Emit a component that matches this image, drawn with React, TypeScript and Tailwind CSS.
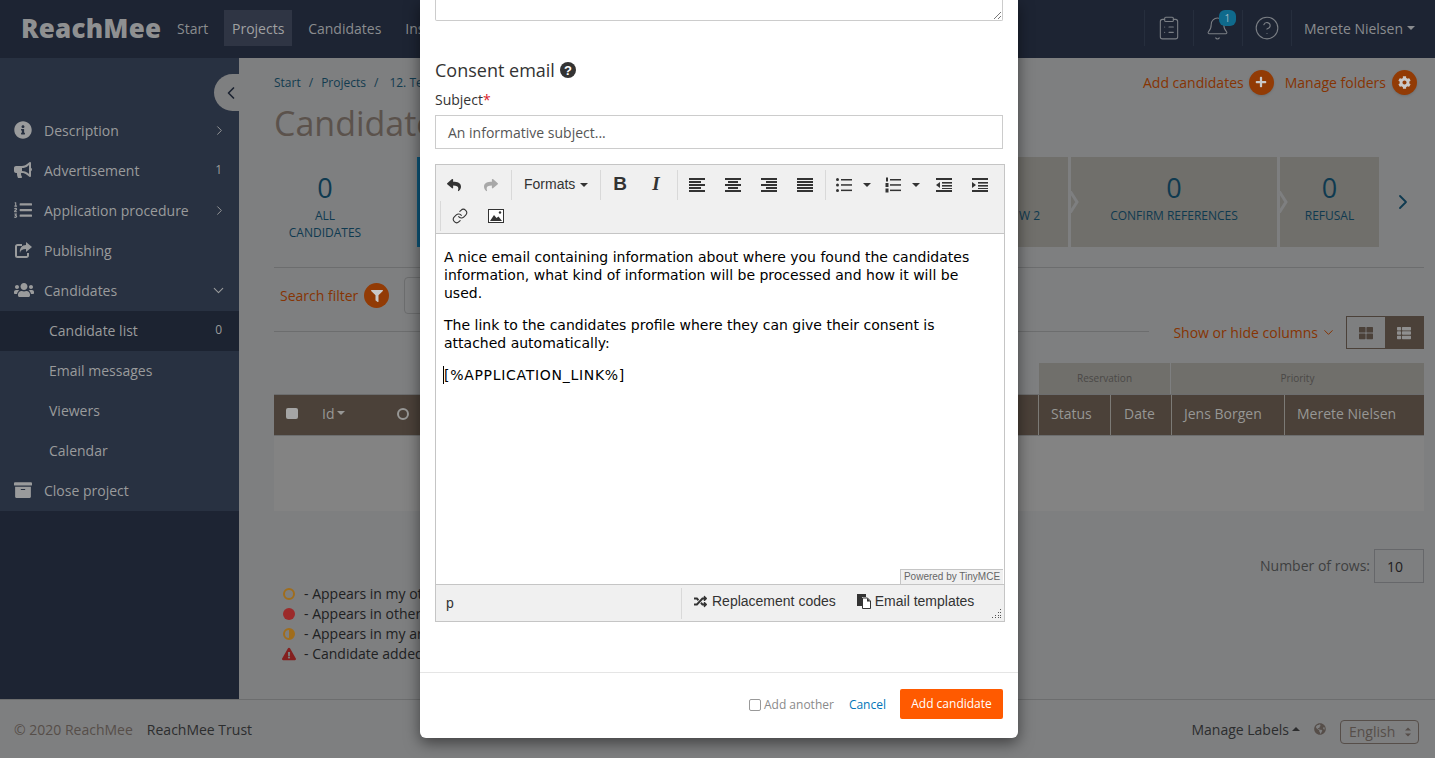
import React from "react";
import { Bell, ChevronDown, ChevronLeft, ChevronRight, CircleHelp, ClipboardList, Link } from "lucide-react";
import {
  FaArchive,
  FaBullhorn,
  FaCog,
  FaExclamationTriangle,
  FaFilter,
  FaGlobeAmericas,
  FaInfoCircle,
  FaListOl,
  FaPlus,
  FaRandom,
  FaReply,
  FaShare,
  FaThLarge,
  FaThList,
  FaUsers,
} from "react-icons/fa";

const Caret = ({ up = false, className = "" }: { up?: boolean; className?: string }) => (
  <span
    className={`inline-block w-0 h-0 border-x-4 border-x-transparent ${up ? "border-b-4 border-b-current" : "border-t-4 border-t-current"} ${className}`}
  />
);

// tinymce line icons: x offset and width per row
function Lines({ rows }: { rows: [number, number][] }) {
  return (
    <svg width="16" height="16" viewBox="0 0 16 16" fill="#333">
      {rows.map(([x, w], i) => (
        <rect key={i} x={x} y={1 + i * 3} width={w} height="2" />
      ))}
    </svg>
  );
}

const BulletIcon = () => (
  <svg width="16" height="16" viewBox="0 0 16 16" fill="#333">
    <circle cx="1.5" cy="2.5" r="1.5" />
    <circle cx="1.5" cy="8" r="1.5" />
    <circle cx="1.5" cy="13.5" r="1.5" />
    <rect x="5" y="2" width="11" height="1.5" />
    <rect x="5" y="7.2" width="11" height="1.5" />
    <rect x="5" y="12.6" width="11" height="1.5" />
  </svg>
);

const NumberIcon = () => (
  <svg width="16" height="16" viewBox="0 0 16 16" fill="#333">
    <rect x="1" y="0.5" width="2" height="4" />
    <rect x="0.5" y="6" width="3" height="4" />
    <rect x="0.5" y="11.5" width="3" height="4" />
    <rect x="5" y="2" width="11" height="1.5" />
    <rect x="5" y="7.2" width="11" height="1.5" />
    <rect x="5" y="12.6" width="11" height="1.5" />
  </svg>
);

const IndentIcon = ({ out = false }: { out?: boolean }) => (
  <svg width="18" height="16" viewBox="0 0 18 16" fill="#333">
    <rect x="1" y="1" width="16" height="2" />
    <rect x="7" y="5" width="10" height="1.6" />
    <rect x="7" y="8" width="10" height="1.6" />
    <rect x="1" y="13" width="16" height="2" />
    <rect x="7" y="11" width="10" height="1" />
    {out ? <path d="M5 5v6L1 8z" /> : <path d="M1 5v6l4-3z" />}
  </svg>
);

const ImageIcon = () => (
  <svg width="16" height="14" viewBox="0 0 16 14">
    <rect x="0.5" y="0.5" width="15" height="13" fill="#fff" stroke="#333" />
    <path d="M2 12l4-6 2.5 3 2-1.5L14 12z" fill="#333" />
    <circle cx="12" cy="3.500" r="1.2" fill="#333" />
  </svg>
);

const TemplatesIcon = () => (
  <svg width="14" height="15" viewBox="0 0 14 15">
    <path d="M0 0h9v3H5v9H0z" fill="#333" />
    <path d="M5.500 4h5l3 3v7.500h-8z" fill="#fff" stroke="#333" />
    <path d="M10 4v3.500h3.500z" fill="#333" />
  </svg>
);

const PublishIcon = () => (
  <svg width="18" height="18" viewBox="0 0 18 18" fill="none">
    <path d="M8 4H3.500A1.500 1.500 0 0 0 2 5.500v9A1.500 1.500 0 0 0 3.500 16h9a1.500 1.500 0 0 0 1.500-1.500V12" stroke="currentColor" strokeWidth="2" />
    <path d="M12 1l6 5-6 5V8C8.500 8 6.500 9 6 12c-.8-4.500 2-8 6-8z" fill="currentColor" />
  </svg>
);

const StageArrow = () => (
  <svg width="10" height="22" viewBox="0 0 10 22" fill="none" className="absolute -left-[2px] top-[34px]">
    <path d="M1 0l7 11-7 11" stroke="#7e7f80" strokeWidth="3" />
  </svg>
);

const ToolButton = ({ children }: { children: React.ReactNode }) => (
  <button className="w-9 h-[30px] flex items-center justify-center text-[#333]">{children}</button>
);

const ToolSep = () => <div className="w-px h-[30px] bg-[#d9d9d9]" />;

const sideItems = [
  { icon: <FaInfoCircle />, label: "Description", arrow: true },
  { icon: <FaBullhorn />, label: "Advertisement", count: "1" },
  { icon: <FaListOl />, label: "Application procedure", arrow: true },
  { icon: <PublishIcon />, label: "Publishing" },
  { icon: <FaUsers size={20} />, label: "Candidates", open: true },
];

const subItems = ["Candidate list", "Email messages", "Viewers", "Calendar"];

function Sidebar() {
  return (
    <aside className="relative w-[239px] shrink-0 bg-[#1d2433] text-[14px] text-[#9a9b9c]">
      <div className="bg-[#283141] pt-[53px]">
        {sideItems.map((item) => (
          <div key={item.label} className="h-10 flex items-center pl-[14px] pr-[12px] pb-[2px]">
            <span className="w-[30px] text-[18px] shrink-0">{item.icon}</span>
            <span className="flex-1">{item.label}</span>
            {item.arrow && <ChevronRight size={15} strokeWidth={1.5} />}
            {item.count && <span className="text-[12px] pr-[5px]">{item.count}</span>}
            {item.open && <ChevronDown size={17} strokeWidth={1.5} />}
          </div>
        ))}
        {subItems.map((label, i) => (
          <div key={label} className={`h-10 flex items-center pl-[49px] pr-[17px] pb-[2px] ${i === 0 ? "bg-[#1c2331]" : ""}`}>
            <span className="flex-1">{label}</span>
            {i === 0 && <span className="text-[12px]">0</span>}
          </div>
        ))}
        <div className="h-10 flex items-center pl-[14px] pb-[2px]">
          <span className="w-[30px] text-[18px] shrink-0">
            <FaArchive />
          </span>
          Close project
        </div>
      </div>
      <div className="absolute right-0 top-[16px] w-[25px] h-[37px] rounded-l-full bg-[#7e7f80] flex items-center justify-center pl-[8px] text-[#1c2331]">
        <ChevronLeft size={20} strokeWidth={2} className="shrink-0" />
      </div>
    </aside>
  );
}

function StageTabs() {
  return (
    <div className="mt-[9px] flex items-stretch h-[90px] text-[#0f3a50]">
      <div className="w-[143px] text-center pt-[14px] pr-[41px]">
        <div className="text-[27px] leading-[34px]">0</div>
        <div className="text-[12px] leading-[17px] mt-[2px]">
          ALL
          <br />
          CANDIDATES
        </div>
      </div>
      <div className="w-[3px] bg-[#0d5579]" />
      <div className="w-[648px] flex justify-end items-center bg-[#706f6b] text-[12px] pt-[27px] pr-[28px]">W 2</div>
      <div className="relative w-[206px] ml-[3px] bg-[#706f6b] text-center pt-[14px]">
        <StageArrow />
        <div className="text-[27px] leading-[34px]">0</div>
        <div className="text-[12px] leading-[17px] mt-[2px]">CONFIRM REFERENCES</div>
      </div>
      <div className="relative w-[99px] ml-[3px] bg-[#706f6b] text-center pt-[14px]">
        <StageArrow />
        <div className="text-[27px] leading-[34px]">0</div>
        <div className="text-[12px] leading-[17px] mt-[2px]">REFUSAL</div>
      </div>
      <div className="flex-1 flex items-center justify-center pl-[2px]">
        <ChevronRight size={24} strokeWidth={1.8} />
      </div>
    </div>
  );
}

function Content() {
  return (
    <main className="flex-1 min-w-0 pl-[35px] pr-[11px] flex flex-col">
      <div className="h-[38px] flex items-end justify-between">
        <div className="text-[12px] text-[#123b4f] flex gap-[8px] h-[26px] items-center">
          <span>Start</span>
          <span>/</span>
          <span>Projects</span>
          <span>/</span>
          <span className="ml-[3px]">12. Test</span>
        </div>
        <div className="flex items-center text-[14px] text-[#863403] h-[26px] mb-[1px] pr-[7px]">
          <span>Add candidates</span>
          <span className="ml-[5px] w-[25px] h-[25px] rounded-full bg-[#923b05] text-[#c9c9c9] text-[12px] flex items-center justify-center shadow">
            <FaPlus />
          </span>
          <span className="ml-[11px]">Manage folders</span>
          <span className="ml-[6px] w-[25px] h-[25px] rounded-full bg-[#923b05] text-[#c9c9c9] text-[13px] flex items-center justify-center shadow">
            <FaCog />
          </span>
        </div>
      </div>
      <h1 className="mt-[3px] text-[34px] leading-[49px] text-[#5b524c]">Candidates</h1>
      <StageTabs />
      <div className="mt-[20px] h-px bg-[#6c6d6e]" />
      <div className="h-[63px] flex items-center pb-[8px]">
        <span className="ml-[6px] text-[14px] text-[#863403]">Search filter</span>
        <span className="ml-[6px] w-[25px] h-[25px] rounded-full bg-[#923b05] text-[#c9c9c9] text-[12px] flex items-center justify-center">
          <FaFilter />
        </span>
        <span className="ml-[15px] w-[20px] h-[37px] border border-[#6c6d6e] rounded" />
      </div>
      <div className="flex items-start justify-end -mt-[15px]">
        <div className="flex-1 h-px bg-[#6c6d6e] mt-[15px] mr-[24px]" />
        <div className="flex items-center text-[14px] text-[#863403] h-[33px]">
          Show or hide columns
          <ChevronDown size={15} strokeWidth={1.6} className="ml-[3px]" />
        </div>
        <div className="ml-[10px] flex w-[78px] h-[33px] border border-[#4b4139]">
          <div className="flex-1 flex items-center justify-center text-[#4b4139] text-[14px]">
            <FaThLarge />
          </div>
          <div className="flex-1 flex items-center justify-center bg-[#4b4139] text-[#8f8f8f] text-[14px]">
            <FaThList />
          </div>
        </div>
      </div>
      <div className="mt-[14px] flex justify-end h-[31px] text-[10px] text-[#4a4846]">
        <div className="w-[132px] bg-[#706f6b] flex items-center justify-center border-r border-[#7e7f80]">Reservation</div>
        <div className="w-[253px] bg-[#706f6b] flex items-center justify-center">Priority</div>
      </div>
      <div className="h-[42px] flex items-center bg-[#4b4139] text-[14px] text-[#979795] border-y border-[#6c6d6e]">
        <span className="ml-[12px] -mt-[4px] w-[12px] h-[11px] rounded-[2px] bg-[#a5a5a5]" />
        <span className="ml-[24px] -mt-[4px] flex items-center gap-[3px]">
          Id
          <Caret />
        </span>
        <span className="ml-[52px] -mt-[2px] w-[12px] h-[12px] rounded-full border-2 border-[#979795]" />
        <div className="flex-1" />
        <div className="w-[72px] h-full flex items-center pl-[12px] pb-[4px] border-l border-[#7c7a76]">Status</div>
        <div className="w-[61px] h-full flex items-center pl-[13px] pb-[4px] border-l border-[#7c7a76]">Date</div>
        <div className="w-[113px] h-full flex items-center pl-[12px] pb-[4px] border-l border-[#7c7a76]">Jens Borgen</div>
        <div className="w-[140px] h-full flex items-center pl-[12px] pb-[4px] border-l border-[#7c7a76]">Merete Nielsen</div>
      </div>
      <div className="h-[75px] bg-[#838383]" />
      <div className="mt-[38px] flex items-center justify-end text-[14px] text-[#3e3f40]">
        <span className="-mt-[2px]">Number of rows:</span>
        <span className="ml-[4px] w-[50px] h-[34px] border border-[#66676a] flex items-center pl-[12px] pt-[1px] text-[#1f2021]">10</span>
      </div>
      <ul className="mt-[1px] text-[14px] text-[#202122] leading-[20px]">
        <li className="flex items-center">
          <span className="ml-[9px] w-[12px] h-[12px] rounded-full border-2 border-[#a06d1c]" />
          <span className="ml-[9px]">- Appears in my other projects</span>
        </li>
        <li className="flex items-center">
          <span className="ml-[9px] w-[12px] h-[12px] rounded-full bg-[#9c2a2a]" />
          <span className="ml-[9px]">- Appears in other projects</span>
        </li>
        <li className="flex items-center">
          <span className="ml-[9px] w-[12px] h-[12px] rounded-full border-2 border-[#a06d1c] bg-[linear-gradient(90deg,transparent_50%,#a06d1c_50%)]" />
          <span className="ml-[9px]">- Appears in my archived projects</span>
        </li>
        <li className="flex items-center">
          <FaExclamationTriangle className="ml-[8px] text-[14px] text-[#84201f]" />
          <span className="ml-[8px]">- Candidate added</span>
        </li>
      </ul>
    </main>
  );
}

function ConsentModal() {
  return (
    <div className="absolute left-[420px] top-0 w-[598px] h-[738px] bg-white rounded-b-[6px] shadow-[0_5px_15px_rgba(0,0,0,0.5)] flex flex-col font-['Open_Sans',sans-serif]">
      <div className="px-[15px]">
        <div className="relative h-[21px] w-[568px] border border-t-0 border-[#ccc] rounded-b-[2px]">
          <svg width="8" height="8" viewBox="0 0 8 8" className="absolute right-[1px] bottom-[1px]" stroke="#777">
            <path d="M1 8l7-7M5 8l3-3" />
          </svg>
        </div>
        <h3 className="mt-[36px] h-[26px] flex items-center gap-[5px] text-[18px] text-[#333]">
          Consent email
          <svg width="16" height="16" viewBox="0 0 16 16">
            <circle cx="8" cy="8" r="8" fill="#333" />
            <text x="8" y="12.500" textAnchor="middle" fontSize="13" fontWeight="700" fill="#fff" fontFamily="'Liberation Sans', sans-serif">
              ?
            </text>
          </svg>
        </h3>
        <div className="mt-[7px] text-[14px] leading-[20px] text-[#333]">
          Subject<span className="text-[#d9232a]">*</span>
        </div>
        <div className="mt-[5px] w-[568px] h-[34px] border border-[#ccc] flex items-center pl-[12px] text-[14px] text-[#555]">
          An informative subject...
        </div>

        <div className="mt-[15px] w-[570px] h-[458px] border border-[#c5c5c5] flex flex-col">
          <div className="h-[69px] bg-[#f0f0f0] border-b border-[#c5c5c5] shrink-0">
            <div className="flex items-center h-[36px] pt-[3px]">
              <ToolButton>
                <FaReply size={14} />
              </ToolButton>
              <div className="w-px" />
              <ToolButton>
                <FaShare size={14} className="text-[#a8a8a8]" />
              </ToolButton>
              <div className="w-[2px]" />
              <ToolSep />
              <button className="w-[88px] h-[30px] flex items-center pl-[12px] gap-[5px] text-[14px] text-[#333] font-['Liberation_Sans',sans-serif]">
                Formats
                <Caret />
              </button>
              <ToolSep />
              <div className="w-px" />
              <ToolButton>
                <span className="text-[19px] font-bold font-['Liberation_Sans',sans-serif]">B</span>
              </ToolButton>
              <ToolButton>
                <span className="text-[19px] font-bold italic font-['Liberation_Serif',serif]">I</span>
              </ToolButton>
              <div className="w-[3px]" />
              <ToolSep />
              <div className="w-px" />
              <ToolButton>
                <Lines rows={[[0, 16], [0, 12], [0, 16], [0, 12], [0, 16]]} />
              </ToolButton>
              <ToolButton>
                <Lines rows={[[0, 16], [3, 10], [0, 16], [3, 10], [0, 16]]} />
              </ToolButton>
              <ToolButton>
                <Lines rows={[[0, 16], [5, 11], [0, 16], [5, 11], [0, 16]]} />
              </ToolButton>
              <ToolButton>
                <Lines rows={[[0, 16], [0, 16], [0, 16], [0, 16], [0, 16]]} />
              </ToolButton>
              <div className="w-[2px]" />
              <ToolSep />
              <ToolButton>
                <BulletIcon />
              </ToolButton>
              <span className="w-[14px] flex justify-center text-[#333] -ml-[2px]">
                <Caret />
              </span>
              <div className="w-px" />
              <ToolButton>
                <NumberIcon />
              </ToolButton>
              <span className="w-[14px] flex justify-center text-[#333] -ml-[2px]">
                <Caret />
              </span>
              <div className="w-[3px]" />
              <ToolButton>
                <IndentIcon out />
              </ToolButton>
              <ToolButton>
                <IndentIcon />
              </ToolButton>
            </div>
            <div className="flex items-center h-[32px] pl-[4px] pb-[2px]">
              <ToolSep />
              <div className="w-px" />
              <ToolButton>
                <Link size={16} strokeWidth={1.6} />
              </ToolButton>
              <ToolButton>
                <ImageIcon />
              </ToolButton>
            </div>
          </div>

          <div className="relative flex-1 px-[8px] pt-[14px] text-[14px] leading-[18px] text-black font-['DejaVu_Sans',sans-serif]">
            <p>
              A nice email containing information about where you found the candidates information, what kind of information will be processed and how it will be used.
            </p>
            <p className="mt-[14px]">The link to the candidates profile where they can give their consent is attached automatically:</p>
            <p className="mt-[14px] tracking-[0.7px] border-l border-black -ml-px pl-0 w-fit">[%APPLICATION_LINK%]</p>
            <div className="absolute right-[1px] bottom-0 w-[103px] h-[15px] border border-b-0 border-r-0 border-[#c5c5c5] bg-[#f0f0f0] text-[10px] leading-[13px] text-center text-[#666] font-['Liberation_Sans',sans-serif]">
              Powered by TinyMCE
            </div>
          </div>

          <div className="relative h-[37px] shrink-0 bg-[#f0f0f0] border-t border-[#c5c5c5] flex items-center font-['Liberation_Sans',sans-serif] text-[14px] text-[#333]">
            <span className="w-[246px] pl-[10px] border-r border-[#d9d9d9] h-[31px] flex items-center">p</span>
            <span className="ml-[12px] flex items-center gap-[5px] -mt-[4px]">
              <FaRandom size={13} />
              Replacement codes
            </span>
            <span className="ml-[21px] flex items-center gap-[4px] -mt-[4px]">
              <TemplatesIcon />
              Email templates
            </span>
            <svg width="10" height="10" viewBox="0 0 10 10" fill="#555" className="absolute right-[2px] bottom-[2px]">
              <rect x="8" y="0" width="1" height="1" />
              <rect x="6" y="3" width="1" height="1" />
              <rect x="8" y="3" width="1" height="1" />
              <rect x="3" y="6" width="1" height="1" />
              <rect x="6" y="6" width="1" height="1" />
              <rect x="8" y="6" width="1" height="1" />
              <rect x="0" y="8" width="1" height="1" />
              <rect x="3" y="8" width="1" height="1" />
              <rect x="6" y="8" width="1" height="1" />
              <rect x="8" y="8" width="1" height="1" />
            </svg>
          </div>
        </div>
      </div>

      <div className="mt-auto h-[66px] border-t border-[#e5e5e5] flex items-center justify-end pr-[15px] pb-[1px] text-[12px]">
        <span className="w-[12px] h-[12px] border border-[#999] rounded-[2px]" />
        <span className="ml-[3px] text-[#8a8a8a]">Add another</span>
        <span className="ml-[15px] text-[#0275b8]">Cancel</span>
        <button className="ml-[14px] -mt-[2px] w-[103px] h-[30px] bg-[#ff5a00] rounded-[2px] text-white">Add candidate</button>
      </div>
    </div>
  );
}

export default function App() {
  return (
    <div className="relative h-[758px] w-full overflow-hidden flex flex-col bg-[#7e7f80] font-['Open_Sans',sans-serif]">
      <header className="h-[58px] shrink-0 bg-[#1d2433] flex items-center pb-[2px] text-[14px] text-[#8a8c8f]">
        <span className="ml-[21px] w-[156px] text-[26px] font-extrabold text-[#8f9091] tracking-[0.2px]">ReachMee</span>
        <span>Start</span>
        <span className="ml-[16px] w-[68px] h-[36px] bg-[#2f3544] flex items-center justify-center text-[#a0a1a2]">Projects</span>
        <span className="ml-[16px]">Candidates</span>
        <span className="ml-[24px]">Insights</span>
        <div className="ml-auto flex items-center h-[36px] pr-[20px]">
          <div className="w-[49px] h-full border-l border-[#262e3d] flex items-center justify-center text-[#7b7f85]">
            <ClipboardList size={26} strokeWidth={1} />
          </div>
          <div className="relative w-[49px] h-full border-l border-[#262e3d] flex items-center justify-center text-[#7b7f85]">
            <Bell size={25} strokeWidth={1} />
            <span className="absolute left-[25px] top-0 w-[17px] h-[16px] rounded-[6px] bg-[#0f6a8c] text-[10px] text-[#a4b9c2] flex items-center justify-center">1</span>
          </div>
          <div className="w-[49px] h-full border-l border-[#262e3d] flex items-center justify-center text-[#7b7f85]">
            <CircleHelp size={26} strokeWidth={1} />
          </div>
          <div className="h-full border-l border-[#262e3d] pl-[12px] flex items-center gap-[4px]">
            Merete Nielsen
            <Caret />
          </div>
        </div>
      </header>

      <div className="flex-1 flex min-h-0">
        <Sidebar />
        <Content />
      </div>

      <footer className="h-[59px] shrink-0 border-t border-[#6c6d6e] flex items-center text-[14px] text-[#2c2d2e] pl-[14px] pr-[16px]">
        <span className="text-[#564e49]">© 2020 ReachMee</span>
        <span className="ml-[14px]">ReachMee Trust</span>
        <span className="ml-auto flex items-center gap-[3px]">
          Manage Labels
          <Caret up />
        </span>
        <FaGlobeAmericas className="ml-[14px] text-[12px] text-[#564e49]" />
        <span className="ml-[14px] mt-[5px] w-[79px] h-[24px] border border-[#564e49] rounded-[4px] flex items-center justify-between pl-[8px] pr-[6px] text-[#564e49]">
          English
          <span className="flex flex-col gap-[2px]">
            <Caret up className="scale-75" />
            <Caret className="scale-75" />
          </span>
        </span>
      </footer>

      <ConsentModal />
    </div>
  );
}
